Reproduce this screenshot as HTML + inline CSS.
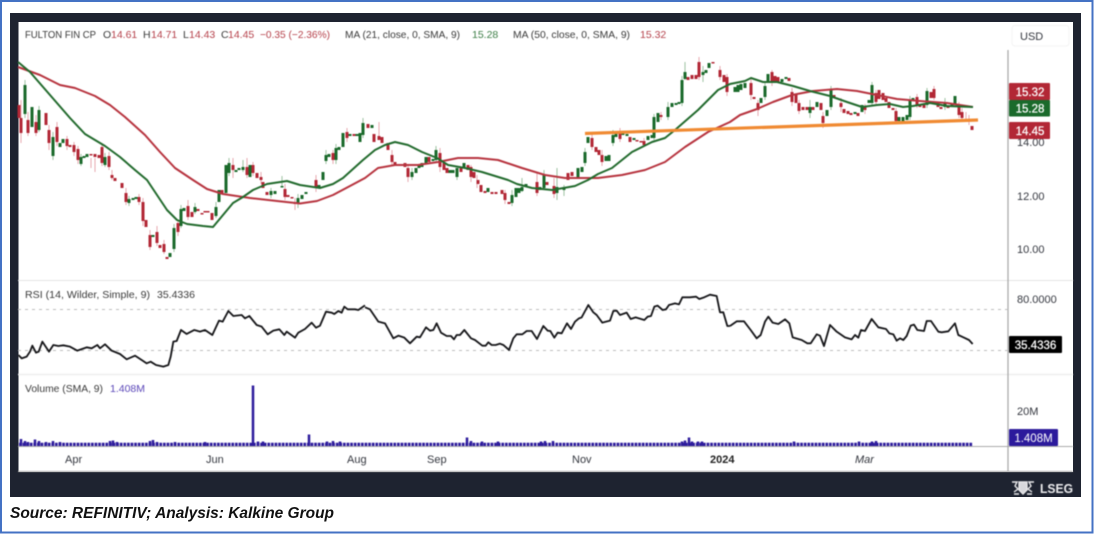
<!DOCTYPE html>
<html><head><meta charset="utf-8"><title>Fulton Fin Cp chart</title>
<style>
html,body{margin:0;padding:0;background:#fff;width:1094px;height:534px;overflow:hidden}
svg{display:block}
text{font-family:"Liberation Sans",sans-serif}
.c{filter:blur(.5px)}
.a{font-size:11px;fill:#33363e}
.l{font-size:10.5px;fill:#3a3a3a}
.r{font-size:10.5px;fill:#b5404a}
.t{font-size:11.5px;fill:#fff;stroke:#fff;stroke-width:.25px;text-anchor:middle}
</style></head><body>
<svg width="1094" height="534" viewBox="0 0 1094 534" xmlns="http://www.w3.org/2000/svg">
<rect x="1" y="1" width="1091.5" height="531.5" fill="#fff" stroke="#4472c4" stroke-width="2"/>
<rect x="10" y="13" width="1071" height="484" fill="#1e2330"/>
<rect x="18.500" y="22" width="1054.500" height="450" fill="#fff"/>
<g class="c">
<path d="M18 280.500H1073" stroke="#e4e4e4" stroke-width="1" fill="none"/>
<path d="M18 374.500H1073" stroke="#eee" stroke-width="1.500" fill="none"/>
<path d="M18 446.500H1073" stroke="#aaa" stroke-width="1" fill="none"/>
<path d="M18 471.500H1073" stroke="#999" stroke-width="1" fill="none"/>
<path d="M1008 50V472" stroke="#a6a6a6" stroke-width="1.200" fill="none"/>
<path d="M18 309.500H1008M18 350.500H1008" stroke="#bdbdbd" stroke-width="1" stroke-dasharray="3 4" fill="none"/>

<!-- wicks -->
<path stroke="#e7a8af" stroke-width="1" fill="none" d="M21 100V143M28 112V136M36 115V136M49 125V150M57 122V146M67 136V150M74 142V156M78 146V164M91 158V168M95 158V172M102 143V166M109 152V170M112 170V180M126 188V205M139 194V205M143 198V226M150 230V250M157 226V246M164 240V254M178 220V236M188 200V220M233 158V178M247 158V178M253 162V176M261 172V184M285 184V200M295 198V210M316 175V192M333 150V164M347 128V142M379 122V140M392 150V166M408 164V182M440 148V172M471 165V182M477 175V188M505 190V204M537 172V196M554 178V198M592 134V150M602 150V166M620 128V142M644 138V146M661 112V120M699 57V80M720 66V80M727 74V96M751 78V100M758 100V116M772 70V86M792 88V106M799 100V114M823 112V128M841 98V112M865 104V114M876 90V104M896 108V124M917 94V108M934 86V100M959 102V118M962 108V120M966 112V122M969 115V125"/>
<path stroke="#9cc2a2" stroke-width="1" fill="none" d="M25 80V118M39 106V132M53 132V160M81 154V166M105 153V167M129 196V206M174 224V252M181 205V228M195 203V214M216 202V218M229 158V176M243 160V172M271 188V198M282 176V186M298 194V208M326 150V164M336 144V164M363 118V138M412 168V180M436 146V162M457 168V180M512 190V206M522 178V192M544 170V190M557 168V200M564 185V196M585 148V166M613 130V146M654 114V140M668 102V120M682 76V106M685 62V80M703 66V82M765 82V100M810 100V118M831 86V110M872 82V106M910 96V120M927 88V108M945 98V110"/>
<!-- red bodies -->
<path stroke="#b22735" stroke-width="3" fill="none" d="M19 105V118M21 118V133M28 120V133M36 122V133M46 113V125M49 130V143M57 127V142M67 139V146M70 145V147M74 145V152M78 149V160M91 154V155.500M95 154V157M99 155V158M102 147V163M109 156V167M112 175V178M115 178V181M122 183V188M126 193V202M139 197V202M143 202V221M146 220V227M150 235V247M157 232V243M160 245V248M164 244V252M167 257V259M178 223V232M188 206V217M192 212V217M198 209V211M202 213V214.500M205 211V212.500M208 211V212.500M212 213V220M222 190V193M233 165V170M247 167V175M253 165V173M257 173V178M261 177V180M263 182V188M267 192V195M285 189V197M288 195V197M292 197V198.500M295 202V204M316 180V188M333 153V160M347 132V138M354 134V136M368 124V128M374 134V142M379 136V140M382 137V143M388 143V150M392 155V162M395 162V165M405 163V167M408 168V177M429 157V162M440 153V167M444 163V170M447 168V173M461 168V172M468 165V170M471 167V177M474 172V178M478 180V184M481 185V192M485 191V193M492 192V194M496 192V194M502 190V194M505 193V200M509 202V204M537 182V193M547 182V185M554 186V194M568 173V180M572 172V176M592 138V147M596 147V152M599 150V155M602 155V162M620 133V139M630 137V142M637 140V141.500M641 141V142.500M644 141V145M661 115V117M688 77V80M692 75V79M696 75V79M699 62V77M713 62V63.500M720 70V77M724 75V82M727 77V92M751 83V95M754 97V99M758 103V110M772 72V83M775 76V83M778 77V83M789 78V81M792 92V102M796 95V103M799 103V111M803 107V110M807 107V110M813 107V110M821 103V110M823 116V123M834 95V97M841 103V107M844 109V113M848 111V114M851 113V115M858 113V116M865 107V110M876 93V102M879 90V99M883 93V100M886 98V102M889 102V108M893 108V110M896 111V121M917 97V106M920 105V107M924 105V108M931 92V98M934 89V98M938 103V107M941 107V109M948 106V108M959 105V115M962 112V118M972 126V130"/>
<!-- green bodies -->
<path stroke="#1a6a2b" stroke-width="3" fill="none" d="M25 85V114M32 107V127M39 110V130M53 137V156M60 143V147M63 139V143M81 157V164M84 156V158M87 154V157M105 157V165M129 199V203M133 198V200M136 197V199M153 235V237M170 253V257M174 228V249M181 209V226M184 208V211M195 207V212M216 207V216M219 190V202M226 165V193M229 163V173M236 170V172M239 168V170M243 167V170M250 165V177M271 191V195M275 191V194M282 186V187.500M298 198V204M302 195V199M306 192V194M319 185V188M323 172V180M326 155V161M329 154V157M336 148V160M339 147V150M343 133V147M350 134V136M357 134V136M360 133V142M363 123V135M372 125V128M412 172V177M416 168V173M419 165V168M422 163V167M426 157V163M433 159V161M436 150V160M450 170V173M453 170V173M457 168V177M464 163V168M488 188V192M512 195V203M516 188V197M519 188V193M522 187V191M526 184V186M540 187V190M544 175V188M557 187V193M564 187V190M578 168V178M582 167V172M585 152V163M588 137V143M606 156V161M609 155V161M613 135V143M616 132V137M623 133V135M627 134V136M634 138V140M648 136V140M652 135V138M654 117V138M658 113V122M668 107V117M672 103V107M676 103V105M679 102V104M682 80V103M685 72V79M703 72V75M706 70V73M709 63V68M735 87V92M738 85V92M741 84V90M745 83V88M761 98V103M765 86V97M768 74V83M782 79V82M786 77V79M810 107V113M817 102V107M827 110V116M831 90V107M855 112V114M862 105V112M869 100V103M872 85V103M899 117V121M903 117V121M907 115V120M910 100V117M913 98V101M927 91V105M945 103V107M952 103V107M955 96V105"/>

<!-- MA lines -->
<path fill="none" stroke="#b7343f" stroke-width="2" stroke-linejoin="round" d="M18 67L40 75 60 85 75 88 95 96 110 105 125 117 145 135 160 152 175 168 193 180 207 189 223 194 250 198 277 201 300 203.500 317 201 333 195 350 186 365 178 378 168 395 165 418 165 438 162 458 158 478 158 498 160 522 168 545 175 565 178 598 178 622 175 645 170 665 162 685 147 708 132 730 122 740 115 757 109 773 102 792 95 813 91 837 89 857 91 877 95 897 99 920 101 947 103 973 107"/>
<path fill="none" stroke="#236b2e" stroke-width="2" stroke-linejoin="round" d="M18 62L30 72 50 95 70 118 85 134 105 146 120 157 135 170 147 180 157 195 167 210 177 220 187 224 203 226 213 227 223 215 233 203 243 197 253 190 267 184 287 181 300 185 320 188 333 184 343 178 363 160 375 150 385 145 395 142 408 145 422 152 437 158 448 165 465 168 482 172 508 180 517 184 532 188 552 190 575 186 588 180 598 174 612 168 632 152 652 142 665 138 675 130 698 110 718 90 730 84 745 81 751 78 763 82 777 82 793 86 810 91 830 96 847 102 862 107 877 105 890 104 903 107 913 106 930 103 947 106 973 107"/>
<path fill="none" stroke="#f08a32" stroke-width="3.200" d="M585 133.500L978 120"/>

<!-- RSI -->
<g fill="none" stroke="#17171a" stroke-width="5.500" stroke-linejoin="round">
<path transform="scale(.33333) translate(0,540)" d="M55 525L65 535 80 530 90 515 97 497 108 518 116 515 127 485 147 515 160 495 175 498 190 496 210 500 232 512 260 502 275 505 292 495 300 505 315 493 335 512 360 522 380 538 405 527 425 540 440 550 452 545 468 555 490 560 505 555 512 530 520 485 530 483 543 450 560 462 583 450 600 455 615 450 637 465 657 422 668 425 685 393 700 408 725 405 735 415 748 408 770 435 785 440 803 463 820 452 838 448 853 465 860 455 885 473 895 458 915 447 935 428 948 443 960 437 978 395 995 398 1003 402 1015 393 1025 398 1033 380 1043 388 1065 388 1075 390 1095 376"/>
<path transform="translate(365,180) scale(.33333)" d="M0 382L15 388 40 425 60 430 85 475 100 467 118 473 135 490 155 470 165 472 183 442 195 452 205 450 215 430 228 458 245 468 258 468 267 478 275 465 285 465 298 450 318 475 330 480 352 497 362 497 370 487 380 495 392 495 405 491 415 495 432 510 445 475 455 463 472 463 485 453 500 453 516 477 535 438 548 452 556 453 568 473 578 458 590 460 606 430 618 447 630 425 642 415 650 412 670 375 685 397 695 405 712 428 735 422 745 393 755 392 765 405 785 398 797 417 812 412 838 420 848 410 858 408 868 380 878 377 893 390 903 388 912 375 930 370 942 373 952 352 975 352 993 350 1003 357 1015 353 1035 344 1055 348 1065 397 1075 397 1087 438 1095 438"/>
<path transform="translate(730,180) scale(.33333)" d="M0 438L20 424 42 424 62 450 80 475 92 465 105 425 115 410 128 428 145 432 165 418 178 430 188 472 215 480 232 490 242 490 260 463 270 467 282 498 300 435 320 455 345 472 365 478 375 465 385 473 393 450 405 453 425 417 445 442 468 447 478 460 490 463 500 482 510 475 520 480 530 468 542 437 552 434 562 450 582 453 590 423 603 423 625 455 635 457 655 454 675 430 685 465 700 472 717 480 728 492"/>
</g>

<!-- Volume -->
<path fill="none" stroke="#2c1a9c" stroke-width="3.200" stroke-dasharray="2.700 .9" d="M19 444.400H973"/>
<path fill="none" stroke="#2c1a9c" stroke-width="2.500" d="M21 446V439M25 446V441M28 446V442M35 446V439.500M39 446V441M46 446V442M53 446V441M60 446V442M110 446V441M113 446V440.500M117 446V442M150 446V441M153 446V440M157 446V442M175 446V442M205 446V442M253 446V385.500M258 446V441.500M263 446V441.500M309 446V434.500M327 446V441.500M333 446V441M340 446V441.500M467 446V437.500M471 446V441M482 446V441.500M498 446V441.500M541 446V441.500M545 446V441M553 446V441M682 446V441.500M685 446V440.500M689 446V437.500M692 446V441.500M698 446V441.500M702 446V441.500M794 446V441.500M859 446V441.500M872 446V441.500M876 446V441"/>

<!-- Legend -->
<text class="l" x="25" y="38" textLength="71" lengthAdjust="spacingAndGlyphs">FULTON FIN CP</text>
<text class="l" x="103" y="38">O</text><text class="r" x="111" y="38">14.61</text>
<text class="l" x="143" y="38">H</text><text class="r" x="151" y="38">14.71</text>
<text class="l" x="183" y="38">L</text><text class="r" x="189" y="38">14.43</text>
<text class="l" x="221" y="38">C</text><text class="r" x="228" y="38">14.45</text>
<text class="r" x="260" y="38" textLength="70" lengthAdjust="spacingAndGlyphs">−0.35 (−2.36%)</text>
<text class="l" x="345" y="38" textLength="115" lengthAdjust="spacingAndGlyphs">MA (21, close, 0, SMA, 9)</text>
<text x="472" y="38" style="font-size:10.5px;fill:#3b7d45">15.28</text>
<text class="l" x="513" y="38" textLength="117" lengthAdjust="spacingAndGlyphs">MA (50, close, 0, SMA, 9)</text>
<text class="r" x="640" y="38">15.32</text>

<text class="l" x="25" y="298" textLength="125" lengthAdjust="spacingAndGlyphs">RSI (14, Wilder, Simple, 9)</text>
<text class="l" x="157" y="298">35.4336</text>
<text class="l" x="25" y="392" textLength="78" lengthAdjust="spacingAndGlyphs">Volume (SMA, 9)</text>
<text x="110" y="392" style="font-size:10.5px;fill:#5a46b8">1.408M</text>

<!-- X axis -->
<text class="a" x="65" y="463">Apr</text>
<text class="a" x="206" y="463">Jun</text>
<text class="a" x="347" y="463">Aug</text>
<text class="a" x="427" y="463">Sep</text>
<text class="a" x="572" y="463">Nov</text>
<text class="a" x="710" y="463" style="font-weight:bold;fill:#222">2024</text>
<text class="a" x="855" y="463" style="font-style:italic">Mar</text>

<!-- Right axis -->
<rect x="1012" y="25.500" width="57" height="20.500" rx="3" fill="#fff" stroke="#f3f3f3"/>
<text class="a" x="1020" y="40">USD</text>
<text class="a" x="1017" y="146">14.00</text>
<text class="a" x="1017" y="200">12.00</text>
<text class="a" x="1017" y="253">10.00</text>
<text class="a" x="1017" y="303">80.0000</text>
<text class="a" x="1017" y="415">20M</text>
<rect x="1009" y="83" width="41" height="17" rx="1" fill="#b22735"/>
<text class="t" x="1030" y="96">15.32</text>
<rect x="1009" y="100" width="41" height="16.500" rx="1" fill="#1a6a2b"/>
<text class="t" x="1030" y="112.500">15.28</text>
<rect x="1009" y="122" width="41" height="17" rx="1" fill="#b22735"/>
<text class="t" x="1030" y="135">14.45</text>
<rect x="1009" y="336" width="53" height="17" rx="1" fill="#000"/>
<text class="t" x="1035.500" y="349">35.4336</text>
<rect x="1009" y="429" width="49" height="17" rx="1" fill="#2c1a9c"/>
<text class="t" x="1033.500" y="442" style="stroke-width:0">1.408M</text>

<!-- LSEG -->
<g fill="none" stroke="#e8e8ea" stroke-width="1.400">
<path d="M1012 482H1017L1015 486 1018 489 1014 492M1034 482H1029L1031 486 1028 489 1032 492"/>
<path d="M1019 482H1027V490L1023 494 1019 490Z" fill="#d8d8dc"/>
<path d="M1014 494H1019M1032 494H1027"/>
</g>
<text x="1040" y="493" textLength="33" lengthAdjust="spacingAndGlyphs" style="font-size:12.500px;font-weight:bold;fill:#ececee">LSEG</text>
</g>
<text x="10" y="518" textLength="324" lengthAdjust="spacingAndGlyphs" style="font-size:15.500px;font-weight:bold;font-style:italic;fill:#111">Source: REFINITIV; Analysis: Kalkine Group</text>
</svg>
</body></html>
